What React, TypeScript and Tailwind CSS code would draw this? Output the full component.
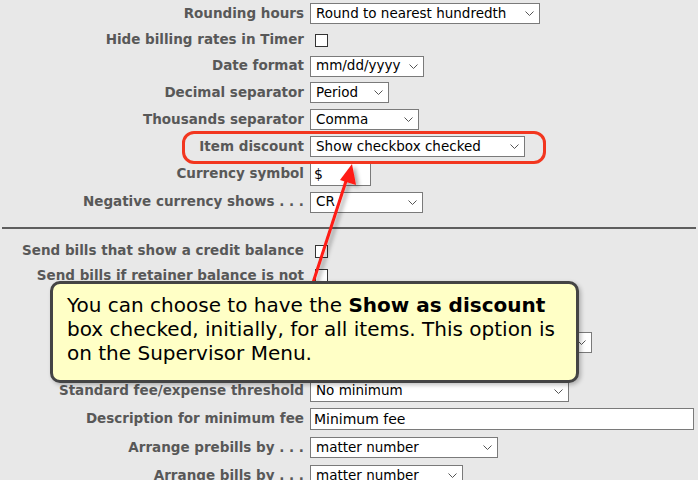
import React from "react";

// Billing preferences form with a tutorial callout over it

type Row =
  | { kind: "select"; label: string; value: string; width: number; h: number }
  | { kind: "input"; label: string; value: string; width: number; h: number; tall?: boolean }
  | { kind: "check"; label: string; h: number }
  | { kind: "blank"; label: string; h: number };

const topRows: Row[] = [
  { kind: "select", label: "Rounding hours", value: "Round to nearest hundredth", width: 230, h: 27 },
  { kind: "check", label: "Hide billing rates in Timer", h: 26 },
  { kind: "select", label: "Date format", value: "mm/dd/yyyy", width: 114, h: 26 },
  { kind: "select", label: "Decimal separator", value: "Period", width: 79, h: 27 },
  { kind: "select", label: "Thousands separator", value: "Comma", width: 109, h: 27 },
  { kind: "select", label: "Item discount", value: "Show checkbox checked", width: 215, h: 27 },
  { kind: "input", label: "Currency symbol", value: "$", width: 61, h: 28, tall: true },
  { kind: "select", label: "Negative currency shows . . .", value: "CR", width: 113, h: 28 },
];

// rows between 290 and 378 sit under the callout
const bottomRows: Row[] = [
  { kind: "check", label: "Send bills that show a credit balance", h: 22 },
  { kind: "check", label: "Send bills if retainer balance is not", h: 27 },
  { kind: "blank", label: "", h: 40 },
  { kind: "select", label: "", value: "", width: 282, h: 26 },
  { kind: "blank", label: "", h: 23 },
  { kind: "select", label: "Standard fee/expense threshold", value: "No minimum", width: 259, h: 26 },
  { kind: "input", label: "Description for minimum fee", value: "Minimum fee", width: 384, h: 29 },
  { kind: "select", label: "Arrange prebills by . . .", value: "matter number", width: 188, h: 29 },
  { kind: "select", label: "Arrange bills by . . .", value: "matter number", width: 153, h: 27 },
];

function Chevron() {
  return (
    <svg className="w-[9px] h-[5px] shrink-0" viewBox="0 0 9 5" fill="none">
      <path d="M0.5 0.5L4.5 4.5L8.5 0.5" stroke="#555" strokeWidth={1} />
    </svg>
  );
}

function Control({ row }: { row: Row }) {
  if (row.kind === "select") {
    return (
      <div
        className="ml-[6px] h-[21px] bg-white border border-[#7a7a7a] flex items-center justify-between pl-[5px] pr-[5px] text-[13.5px] text-black"
        style={{ width: row.width }}
      >
        <span className="leading-none whitespace-nowrap">{row.value}</span>
        <Chevron />
      </div>
    );
  }
  if (row.kind === "input") {
    return (
      <div
        className={`ml-[6px] bg-white border border-[#7a7a7a] flex items-center pl-[3px] text-[14px] text-black ${row.tall ? "h-[23px]" : "h-[22px]"}`}
        style={{ width: row.width }}
      >
        <span className="leading-none">{row.value}</span>
      </div>
    );
  }
  if (row.kind === "check") {
    return <div className="ml-[11px] w-[13px] h-[13px] bg-white border border-[#333]" />;
  }
  return null;
}

function FormRow({ row }: { row: Row }) {
  return (
    <div className="flex items-center" style={{ height: row.h }}>
      <div className="w-[304px] shrink-0 text-right font-bold text-[13.5px] text-[#585858] whitespace-nowrap leading-none">
        {row.label}
      </div>
      <Control row={row} />
    </div>
  );
}

export default function App() {
  return (
    <div
      className="relative w-[698px] h-[480px] overflow-hidden bg-[#e8e8e8]"
      style={{ fontFamily: '"DejaVu Sans", Verdana, sans-serif' }}
    >
      <div className="flex flex-col">
        {topRows.map((r, i) => (
          <FormRow key={"t" + i} row={r} />
        ))}
        <div className="h-[24px] flex items-center px-[2px]">
          <div className="w-full border-t-2 border-[#5e5e5e]" />
        </div>
        {bottomRows.map((r, i) => (
          <FormRow key={"b" + i} row={r} />
        ))}
      </div>

      {/* Highlight around Item discount */}
      <div className="absolute left-[182px] top-[131px] w-[364px] h-[33px] rounded-[12px] border-[3px] border-[#f2361f]" />

      {/* Arrow */}
      <svg className="absolute inset-0 w-[698px] h-[480px]" viewBox="0 0 698 480">
        <defs>
          <filter id="sh" x="-50%" y="-50%" width="200%" height="200%">
            <feDropShadow dx="3" dy="2" stdDeviation="2" floodColor="#000" floodOpacity="0.35" />
          </filter>
        </defs>
        <g filter="url(#sh)">
          <line x1="310" y1="292" x2="347" y2="178" stroke="#ff1a12" strokeWidth={3} />
          <polygon points="352,164 356,185 340,180" fill="#ff1a12" />
        </g>
      </svg>

      {/* Callout */}
      <div className="absolute left-[50px] top-[281px] w-[529px] h-[102px] rounded-[10px] border-[3px] border-[#444] bg-[#ffffc6] shadow-[2px_2px_4px_rgba(0,0,0,0.25)] pl-[14px] pt-[9px] text-[20px] leading-[24px] text-black">
        You can choose to have the <b>Show as discount</b> box checked, initially, for all items. This option is on the Supervisor Menu.
      </div>
    </div>
  );
}
